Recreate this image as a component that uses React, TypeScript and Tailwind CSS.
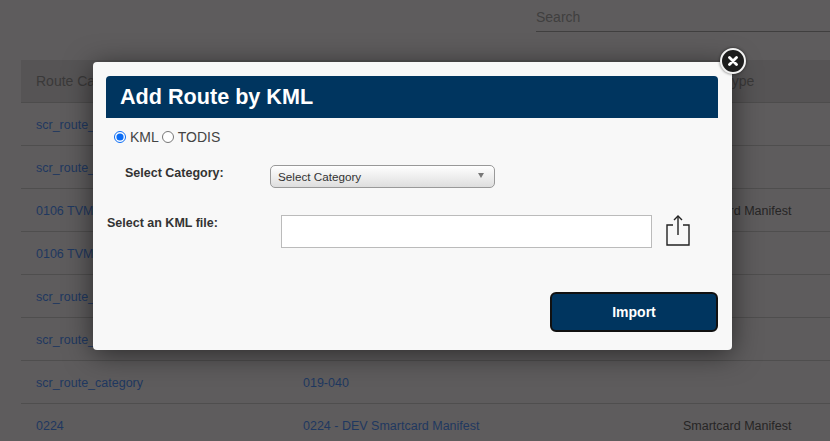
import React from 'react';

const rows = [
  { category: 'scr_route_category', name: '', type: '' },
  { category: 'scr_route_category', name: '', type: '' },
  { category: '0106 TVM', name: '', type: 'Smartcard Manifest' },
  { category: '0106 TVM', name: '', type: '' },
  { category: 'scr_route_category', name: '', type: '' },
  { category: 'scr_route_category', name: '', type: '' },
  { category: 'scr_route_category', name: '019-040', type: '' },
  { category: '0224', name: '0224 - DEV Smartcard Manifest', type: 'Smartcard Manifest' },
];

function ShareIcon() {
  return (
    <svg width="26" height="32" viewBox="0 0 26 32" fill="none" stroke="#222" strokeWidth="1.4">
      <path d="M8 10H2V30H24V10H18" />
      <path d="M13 1V20" />
      <path d="M9 5L13 1L17 5" />
    </svg>
  );
}

export default function App() {
  return (
    <div className="relative w-[830px] h-[441px] overflow-hidden bg-[#5e5c5d] font-['Liberation_Sans',Arial,sans-serif]">
      {/* dimmed page behind the modal */}
      <div className="pl-[21px]">
        <div className="flex justify-end h-[60px]">
          <div className="w-[294px] h-[32px] border-b border-[#403f3f] text-sm text-[#403f3f] pt-[7px]">Search</div>
        </div>
        <div className="grid grid-cols-[282px_380px_1fr] h-[43px] items-center bg-[#565455] border-b border-[#4d4c4c] text-sm text-[#3a3939]">
          <div className="pl-[15px]">Route Category</div>
          <div>Route Name</div>
          <div>Route Type</div>
        </div>
        {rows.map((row, i) => (
          <div key={i} className="grid grid-cols-[282px_380px_1fr] h-[43px] pt-[2px] items-center border-b border-[#4f4e4e] text-[12.5px] text-[#1f3860]">
            <div className="pl-[15px]">{row.category}</div>
            <div>{row.name}</div>
            <div className="text-[#262525]">{row.type}</div>
          </div>
        ))}
      </div>

      {/* modal */}
      <div className="absolute left-[93px] top-[62px] w-[639px] h-[288px] bg-[#f8f8f8] rounded-[4px] shadow-[0_4px_28px_rgba(0,0,0,0.55)] pl-[13px] pr-[14px] pt-[14px]">
        <div className="h-[42px] bg-[#00355f] rounded-t-[4px] pl-[14px] flex items-center text-white font-bold text-[21.6px]">
          Add Route by KML
        </div>

        <div className="flex items-center h-[38px] pl-[8px] text-sm text-[#444]">
          <input type="radio" name="kind" defaultChecked className="w-[12px] h-[12px] m-0 accent-[#0a6cf5]" />
          <span className="ml-[4px]">KML</span>
          <input type="radio" name="kind" className="w-[12px] h-[12px] m-0 ml-[3px]" />
          <span className="ml-[4px]">TODIS</span>
        </div>

        <div className="flex items-start mt-[8px] pl-[19px]">
          <label className="w-[145px] text-[12.5px] font-bold text-[#333]">Select Category:</label>
          <div className="relative w-[225px] h-[23px]">
            <select className="w-full h-full appearance-none rounded-[5px] border border-[#999] bg-gradient-to-b from-white to-[#dedede] pl-[7px] text-[11.7px] text-[#333] outline-none">
              <option>Select Category</option>
            </select>
            <div className="absolute right-[11px] top-[9px] w-0 h-0 border-x-[3px] border-x-transparent border-t-[5px] border-t-[#777]" />
          </div>
        </div>

        <div className="flex items-start mt-[28px] pl-px">
          <label className="w-[174px] -mt-[1px] text-[12.5px] font-bold text-[#333]">Select an KML file:</label>
          <input type="text" className="w-[371px] h-[33px] bg-white border border-[#bbb] outline-none" />
          <div className="ml-[13px]">
            <ShareIcon />
          </div>
        </div>

        <div className="flex justify-end mt-[44px]">
          <button className="w-[168px] h-[40px] rounded-[6px] border-2 border-[#111] bg-[#00355f] text-white text-sm font-bold">
            Import
          </button>
        </div>
      </div>

      {/* close button */}
      <button className="absolute left-[720px] top-[48px] w-[26px] h-[26px] rounded-full bg-[#1d1d1d] border-2 border-[#f2f2f2] shadow-[0_0_3px_rgba(0,0,0,0.6)] flex items-center justify-center">
        <svg width="10" height="10" viewBox="0 0 10 10" stroke="white" strokeWidth="2.8" strokeLinecap="round">
          <path d="M1.5 1.5L8.5 8.5M8.5 1.5L1.5 8.5" />
        </svg>
      </button>
    </div>
  );
}
